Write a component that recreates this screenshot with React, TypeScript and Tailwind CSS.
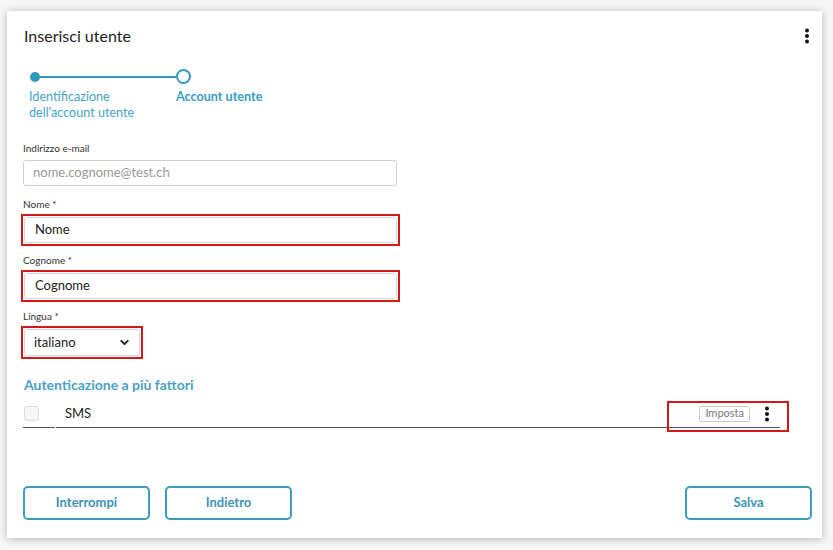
import { ChevronDown } from 'lucide-react';

const font = { fontFamily: 'Lato, "Noto Sans", sans-serif' };

function Kebab({ className = '' }: { className?: string }) {
  return (
    <svg className={className} width="6" height="16" viewBox="0 0 6 16" fill="#111">
      <circle cx="3" cy="2.5" r="2" />
      <circle cx="3" cy="8" r="2" />
      <circle cx="3" cy="13.5" r="2" />
    </svg>
  );
}

function Label({ children }: { children: React.ReactNode }) {
  return <div className="h-[14px] text-[10px] leading-[14px] text-[#333]">{children}</div>;
}

// red annotation frame around a field
function RedBox({ className = '', children }: { className?: string; children: React.ReactNode }) {
  return (
    <div className={`-ml-[2px] mt-[3px] border-2 border-[#d01a1a] p-px ${className}`}>{children}</div>
  );
}

export default function App() {
  return (
    <div style={font} className="h-[550px] w-[833px] overflow-hidden bg-[#f7f7f7] pl-[7px] pr-[11px] pt-[11px]">
      <div className="flex h-[527px] flex-col bg-white pl-[16px] pr-[10px] pt-[15px] pb-[18px] shadow-[0_1px_8px_rgba(0,0,0,0.28)]">
        {/* Header */}
        <div className="flex h-[20px] items-center justify-between">
          <h1 className="pl-px text-[16px] leading-[20px] text-[#222]">Inserisci utente</h1>
          <Kebab className="mr-[2px]" />
        </div>

        {/* Stepper */}
        <div className="mt-[23px] flex items-center pl-[7px]">
          <div className="h-[10px] w-[10px] rounded-full bg-[#2f98bd]" />
          <div className="h-[2px] w-[136px] bg-[#2f98bd]" />
          <div className="h-[15px] w-[15px] rounded-full border-2 border-[#2f98bd] bg-white" />
        </div>
        <div className="mt-[5px] flex pl-[6px] text-[12.6px] leading-[16px] text-[#46a3c6]">
          <div className="w-[147px]">
            Identificazione
            <br />
            dell'account utente
          </div>
          <div className="font-bold text-[#3a9cc0]">Account utente</div>
        </div>

        {/* Form */}
        <div className="mt-[20px]">
          <Label>Indirizzo e-mail</Label>
          <div className="mt-[5px] flex h-[26px] w-[374px] items-center rounded-[3px] border border-[#d0d0d0] px-[9px] text-[13px] text-[#999]">
            nome.cognome@test.ch
          </div>
        </div>
        <div className="mt-[11px]">
          <Label>Nome *</Label>
          <RedBox className="w-[379px]">
            <div className="flex h-[26px] items-center rounded-[3px] border border-[#d6d6d6] px-[10px] text-[13px] text-[#222]">
              Nome
            </div>
          </RedBox>
        </div>
        <div className="mt-[7px]">
          <Label>Cognome *</Label>
          <RedBox className="w-[379px]">
            <div className="flex h-[26px] items-center rounded-[3px] border border-[#d6d6d6] px-[10px] text-[13px] text-[#222]">
              Cognome
            </div>
          </RedBox>
        </div>
        <div className="mt-[7px]">
          <Label>Lingua *</Label>
          <RedBox className="w-[122px]">
            <div className="flex h-[27px] items-center justify-between rounded-[3px] border border-[#d6d6d6] pl-[9px] pr-[8px] text-[13px] text-[#222]">
              italiano
              <ChevronDown size={13} strokeWidth={3.5} color="#222" />
            </div>
          </RedBox>
        </div>

        {/* MFA */}
        <h2 className="mt-[17px] pl-px text-[14px] font-bold leading-[18px] text-[#4aa0c6]">
          Autenticazione a più fattori
        </h2>
        <div className="relative mt-[6px] flex h-[28px] w-[757px]">
          <div className="flex w-[32px] items-center border-b border-[#555] pl-px">
            <div className="h-[15px] w-[15px] rounded-[3px] border border-[#ddd] bg-[#f6f6f6]" />
          </div>
          <div className="ml-px flex flex-1 items-center justify-between border-b border-[#555] pl-[9px] pr-[10px]">
            <span className="text-[13px] text-[#222]">SMS</span>
            <div className="flex items-center gap-[14px]">
              <div className="flex h-[16px] items-center rounded-[2px] border border-[#ccc] px-[5px] text-[11px] text-[#777]">
                Imposta
              </div>
              <Kebab />
            </div>
          </div>
          <div className="pointer-events-none absolute top-px left-[644px] h-[31px] w-[122px] border-2 border-[#d01a1a]" />
        </div>

        {/* Footer */}
        <div className="mt-auto flex items-center justify-between">
          <div className="flex gap-[15px]">
            <button className="h-[34px] w-[127px] rounded-[5px] border-2 border-[#3a9cc0] text-[13px] font-bold text-[#3d93b8]">
              Interrompi
            </button>
            <button className="h-[34px] w-[127px] rounded-[5px] border-2 border-[#3a9cc0] text-[13px] font-bold text-[#3d93b8]">
              Indietro
            </button>
          </div>
          <button className="h-[34px] w-[127px] rounded-[5px] border-2 border-[#3a9cc0] text-[13px] font-bold text-[#3d93b8]">
            Salva
          </button>
        </div>
      </div>
    </div>
  );
}
